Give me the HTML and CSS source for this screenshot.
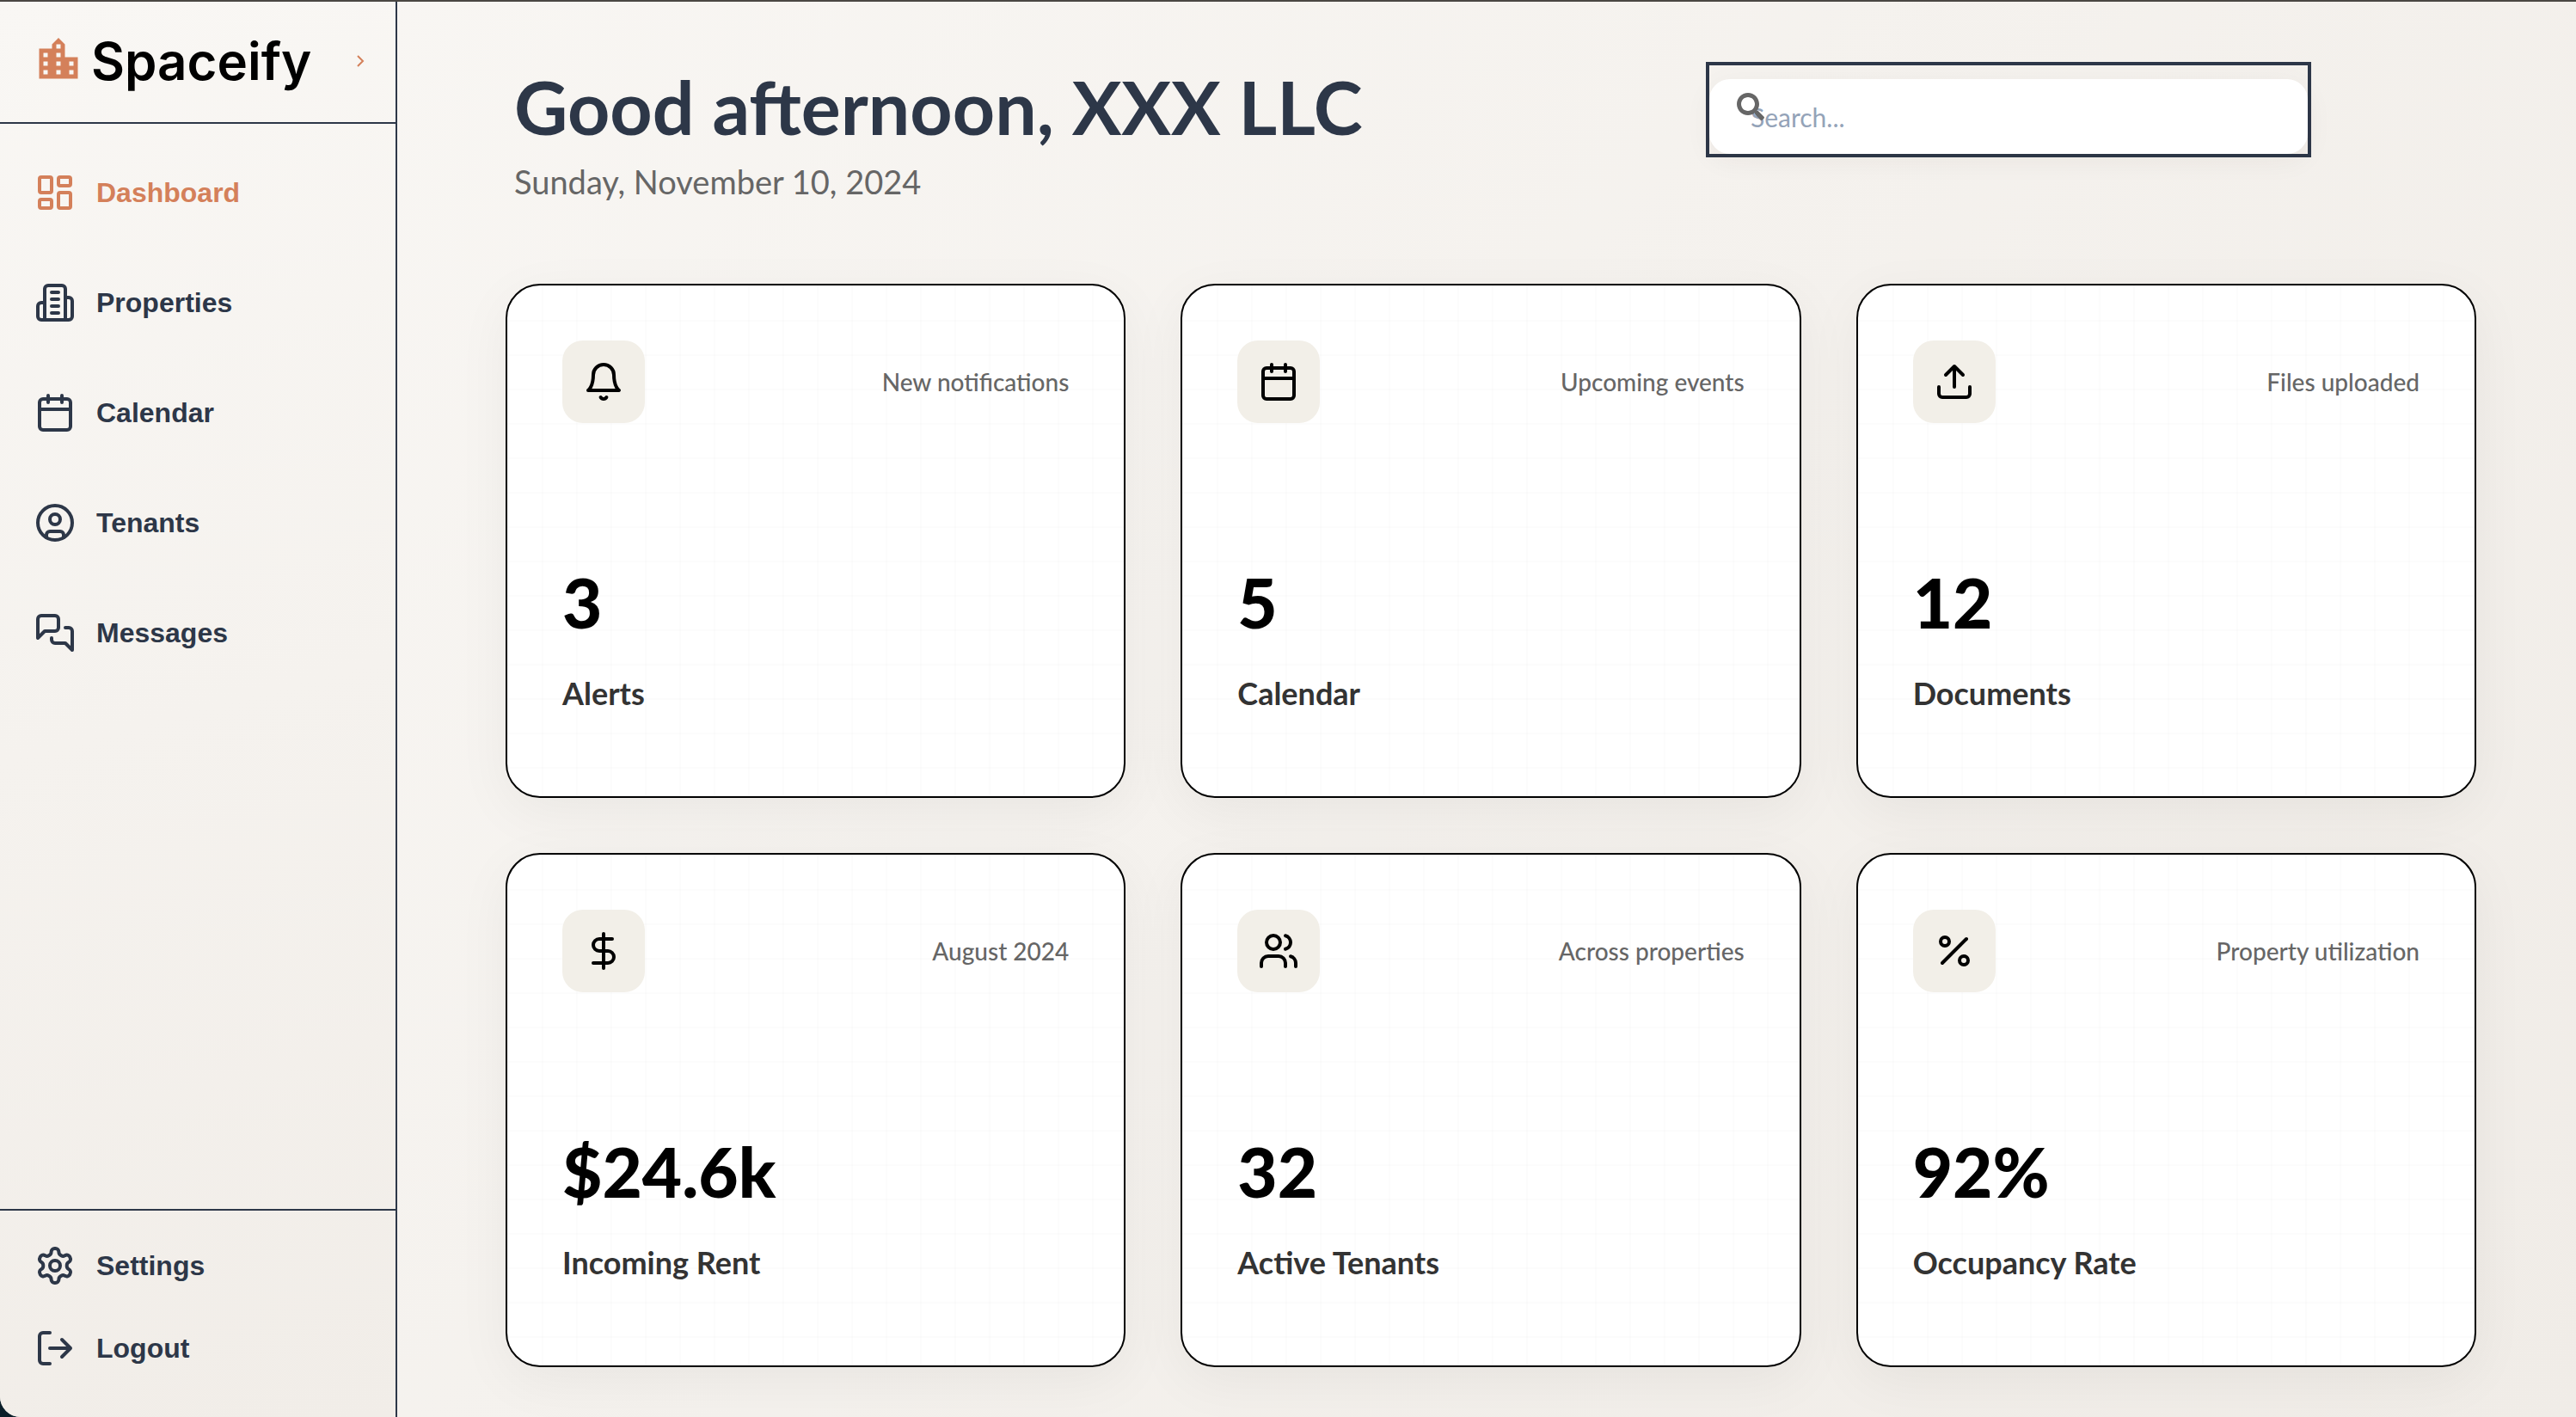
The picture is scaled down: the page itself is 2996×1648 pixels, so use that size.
FILE: index.html
```html
<!DOCTYPE html>
<html lang="en">
<head>
<meta charset="utf-8">
<meta name="viewport" content="width=device-width, initial-scale=1">
<title>Spaceify – Dashboard</title>
<link rel="stylesheet" href="styles.css">
</head>
<body>
<div class="app">
  <aside class="sidebar">
    <div class="brand">
      <svg class="brand-icon" viewBox="0 0 24 24" aria-hidden="true"><path d="M15 11V5l-3-3-3 3v2H3v14h18V11h-6zm-8 8H5v-2h2v2zm0-4H5v-2h2v2zm0-4H5V9h2v2zm6 8h-2v-2h2v2zm0-4h-2v-2h2v2zm0-4h-2V9h2v2zm0-4h-2V5h2v2zm6 12h-2v-2h2v2zm0-4h-2v-2h2v2z"/></svg>
      <span class="brand-name">Spaceify</span>
      <button class="collapse" type="button" aria-label="Toggle sidebar"><svg viewBox="0 0 10 16" aria-hidden="true"><path d="M2 2l6 6-6 6"/></svg></button>
    </div>
    <nav class="nav" aria-label="Main">
      <a class="nav-link active" href="#"><svg class="icon" viewBox="0 0 24 24" aria-hidden="true"><rect x="3" y="3" width="7" height="9" rx="1"/><rect x="14" y="3" width="7" height="5" rx="1"/><rect x="14" y="12" width="7" height="9" rx="1"/><rect x="3" y="16" width="7" height="5" rx="1"/></svg>Dashboard</a>
      <a class="nav-link" href="#"><svg class="icon" viewBox="0 0 24 24" aria-hidden="true"><path d="M6 22V4a2 2 0 0 1 2-2h8a2 2 0 0 1 2 2v18Z"/><path d="M6 12H4a2 2 0 0 0-2 2v6a2 2 0 0 0 2 2h2"/><path d="M18 9h2a2 2 0 0 1 2 2v9a2 2 0 0 1-2 2h-2"/><path d="M10 6h4M10 10h4M10 14h4M10 18h4"/></svg>Properties</a>
      <a class="nav-link" href="#"><svg class="icon" viewBox="0 0 24 24" aria-hidden="true"><path d="M8 2v4M16 2v4"/><rect x="3" y="4" width="18" height="18" rx="2"/><path d="M3 10h18"/></svg>Calendar</a>
      <a class="nav-link" href="#"><svg class="icon" viewBox="0 0 24 24" aria-hidden="true"><circle cx="12" cy="12" r="10"/><circle cx="12" cy="10" r="3"/><path d="M7 20.662V19a2 2 0 0 1 2-2h6a2 2 0 0 1 2 2v1.662"/></svg>Tenants</a>
      <a class="nav-link" href="#"><svg class="icon" viewBox="0 0 24 24" aria-hidden="true"><path d="M14 9a2 2 0 0 1-2 2H6l-4 4V4c0-1.1.9-2 2-2h8a2 2 0 0 1 2 2v5Z"/><path d="M18 9h2a2 2 0 0 1 2 2v11l-4-4h-6a2 2 0 0 1-2-2v-1"/></svg>Messages</a>
    </nav>
    <nav class="nav-footer" aria-label="Account">
      <a class="nav-link" href="#"><svg class="icon" viewBox="0 0 24 24" aria-hidden="true"><path d="M12.22 2h-.44a2 2 0 0 0-2 2v.18a2 2 0 0 1-1 1.73l-.43.25a2 2 0 0 1-2 0l-.15-.08a2 2 0 0 0-2.73.73l-.22.38a2 2 0 0 0 .73 2.73l.15.1a2 2 0 0 1 1 1.72v.51a2 2 0 0 1-1 1.74l-.15.09a2 2 0 0 0-.73 2.73l.22.38a2 2 0 0 0 2.73.73l.15-.08a2 2 0 0 1 2 0l.43.25a2 2 0 0 1 1 1.73V20a2 2 0 0 0 2 2h.44a2 2 0 0 0 2-2v-.18a2 2 0 0 1 1-1.73l.43-.25a2 2 0 0 1 2 0l.15.08a2 2 0 0 0 2.73-.73l.22-.39a2 2 0 0 0-.73-2.73l-.15-.08a2 2 0 0 1-1-1.74v-.5a2 2 0 0 1 1-1.74l.15-.09a2 2 0 0 0 .73-2.73l-.22-.38a2 2 0 0 0-2.73-.73l-.15.08a2 2 0 0 1-2 0l-.43-.25a2 2 0 0 1-1-1.73V4a2 2 0 0 0-2-2z"/><circle cx="12" cy="12" r="3"/></svg>Settings</a>
      <a class="nav-link" href="#"><svg class="icon" viewBox="0 0 24 24" aria-hidden="true"><path d="M9 21H5a2 2 0 0 1-2-2V5a2 2 0 0 1 2-2h4"/><path d="M16 17l5-5-5-5M21 12H9"/></svg>Logout</a>
    </nav>
  </aside>

  <main class="main">
    <header class="page-head">
      <div class="greeting">
        <h1 class="title">Good afternoon, XXX LLC</h1>
        <p class="date">Sunday, November 10, 2024</p>
      </div>
      <form class="search" role="search">
        <input class="search-input" type="search" placeholder="Search..." aria-label="Search">
        <svg class="search-icon" viewBox="0 0 512 512" aria-hidden="true"><path d="M505 442.7L405.3 343c-4.5-4.5-10.6-7-17-7H372c27.6-35.3 44-79.7 44-128C416 93.1 322.9 0 208 0S0 93.1 0 208s93.1 208 208 208c48.3 0 92.7-16.4 128-44v16.3c0 6.4 2.5 12.5 7 17l99.7 99.7c9.4 9.4 24.6 9.4 33.9 0l28.3-28.3c9.4-9.4 9.4-24.6.1-34zM208 336c-70.7 0-128-57.2-128-128 0-70.7 57.2-128 128-128 70.7 0 128 57.2 128 128 0 70.7-57.2 128-128 128z"/></svg>
      </form>
    </header>

    <section class="cards" aria-label="Overview">
      <article class="card">
        <div class="card-head"><span class="card-icon"><svg class="icon" viewBox="0 0 24 24" aria-hidden="true"><path d="M6 8a6 6 0 0 1 12 0c0 7 3 9 3 9H3s3-2 3-9"/><path d="M10.3 21a1.94 1.94 0 0 0 3.4 0"/></svg></span><span class="card-meta">New notifications</span></div>
        <div class="card-body"><p class="card-value">3</p><h2 class="card-label">Alerts</h2></div>
      </article>
      <article class="card">
        <div class="card-head"><span class="card-icon"><svg class="icon" viewBox="0 0 24 24" aria-hidden="true"><path d="M8 2v4M16 2v4"/><rect x="3" y="4" width="18" height="18" rx="2"/><path d="M3 10h18"/></svg></span><span class="card-meta">Upcoming events</span></div>
        <div class="card-body"><p class="card-value">5</p><h2 class="card-label">Calendar</h2></div>
      </article>
      <article class="card">
        <div class="card-head"><span class="card-icon"><svg class="icon" viewBox="0 0 24 24" aria-hidden="true"><path d="M21 15v4a2 2 0 0 1-2 2H5a2 2 0 0 1-2-2v-4"/><path d="M17 8l-5-5-5 5M12 3v12"/></svg></span><span class="card-meta">Files uploaded</span></div>
        <div class="card-body"><p class="card-value">12</p><h2 class="card-label">Documents</h2></div>
      </article>
      <article class="card">
        <div class="card-head"><span class="card-icon"><svg class="icon" viewBox="0 0 24 24" aria-hidden="true"><path d="M12 2v20"/><path d="M17 5H9.500a3.500 3.500 0 0 0 0 7h5a3.500 3.500 0 0 1 0 7H6"/></svg></span><span class="card-meta">August 2024</span></div>
        <div class="card-body"><p class="card-value">$24.6k</p><h2 class="card-label">Incoming Rent</h2></div>
      </article>
      <article class="card">
        <div class="card-head"><span class="card-icon"><svg class="icon" viewBox="0 0 24 24" aria-hidden="true"><path d="M16 21v-2a4 4 0 0 0-4-4H6a4 4 0 0 0-4 4v2"/><circle cx="9" cy="7" r="4"/><path d="M22 21v-2a4 4 0 0 0-3-3.870"/><path d="M16 3.130a4 4 0 0 1 0 7.750"/></svg></span><span class="card-meta">Across properties</span></div>
        <div class="card-body"><p class="card-value">32</p><h2 class="card-label">Active Tenants</h2></div>
      </article>
      <article class="card">
        <div class="card-head"><span class="card-icon"><svg class="icon" viewBox="0 0 24 24" aria-hidden="true"><path d="M19 5L5 19"/><circle cx="6.500" cy="6.500" r="2.500"/><circle cx="17.500" cy="17.500" r="2.500"/></svg></span><span class="card-meta">Property utilization</span></div>
        <div class="card-body"><p class="card-value">92%</p><h2 class="card-label">Occupancy Rate</h2></div>
      </article>
    </section>
  </main>
</div>
</body>
</html>
```
FILE: styles.css
```css
:root {
  --navy: #2d3748;
  --accent: #d4805a;
  --muted: #666;
  --display: Lato, "Open Sans", sans-serif;
}

* { box-sizing: border-box; }

body {
  margin: 0;
  background: #0b1f2a;
  font-family: var(--display);
}

h1, h2, p { margin: 0; }

.app {
  display: flex;
  min-height: 100vh;
  border-top: 2px solid #4a4743;
  border-bottom-left-radius: 24px;
  overflow: hidden;
  background: linear-gradient(135deg, #f9f7f4 0%, #f0ece7 100%);
}

.icon {
  width: 48px;
  height: 48px;
  flex: none;
  fill: none;
  stroke: currentColor;
  stroke-width: 2;
  stroke-linecap: round;
  stroke-linejoin: round;
}

/* Sidebar */
.sidebar {
  display: flex;
  flex-direction: column;
  flex: none;
  width: 462px;
  border-right: 2px solid var(--navy);
  background: linear-gradient(165deg, #f9f7f4 0%, #f1ede8 100%);
}

.brand {
  display: flex;
  align-items: center;
  gap: 8px;
  height: 142px;
  padding: 0 28px 2px 38px;
  border-bottom: 2px solid var(--navy);
}

.brand-icon {
  width: 60px;
  height: 60px;
  margin-bottom: 4px;
  fill: var(--accent);
}

.brand-name {
  flex: 1;
  font-family: Inter, sans-serif;
  font-size: 60px;
  font-weight: 600;
  line-height: 72px;
  color: #000;
}

.collapse {
  display: flex;
  padding: 8px;
  border: 0;
  background: none;
}

.collapse svg {
  width: 10px;
  height: 16px;
  fill: none;
  stroke: var(--accent);
  stroke-width: 2;
}

.nav {
  display: flex;
  flex-direction: column;
  flex: 1;
  gap: 32px;
  padding: 32px 0;
}

.nav-footer {
  padding: 16px 0 32px;
  border-top: 2px solid var(--navy);
}

.nav-link {
  display: flex;
  align-items: center;
  gap: 24px;
  height: 96px;
  padding: 0 40px;
  font-family: "Liberation Sans", Arial, sans-serif;
  font-size: 32px;
  font-weight: 700;
  color: var(--navy);
  text-decoration: none;
}

.nav-link.active { color: var(--accent); }

/* Main column */
.main {
  flex: 1;
  min-width: 0;
  padding: 70px 116px 56px 126px;
}

.page-head {
  display: flex;
  justify-content: space-between;
  align-items: flex-start;
  margin-bottom: 84px;
  padding: 0 192px 0 10px;
}

.title {
  font-size: 86px;
  font-weight: 700;
  line-height: 104px;
  color: var(--navy);
}

.date {
  font-size: 38px;
  line-height: 70px;
  color: var(--muted);
}

.search {
  position: relative;
  width: 704px;
  padding-top: 16px;
  border: 4px solid var(--navy);
}

.search-input {
  display: block;
  width: 100%;
  height: 87px;
  padding: 0 48px;
  border: 0;
  border-radius: 24px;
  outline: 0;
  appearance: none;
  background: #fff;
  box-shadow: 0 8px 32px rgba(60, 30, 20, .05);
  font-family: var(--display);
  font-size: 30px;
  color: var(--navy);
}

.search-input::placeholder {
  color: #94a3b8;
  opacity: 1;
}

.search-icon {
  position: absolute;
  top: 32px;
  left: 32px;
  width: 32px;
  height: 32px;
  fill: var(--muted);
}

/* Stat cards */
.cards {
  display: grid;
  grid-template-columns: repeat(3, minmax(0, 1fr));
  gap: 64px;
}

.card {
  display: flex;
  flex-direction: column;
  justify-content: space-between;
  min-height: 598px;
  padding: 64px 64px 98px;
  border: 2px solid #000;
  border-radius: 40px;
  background:
    linear-gradient(rgba(0, 0, 0, .012) 2px, transparent 2px) 0 0 / 40px 40px,
    linear-gradient(90deg, rgba(0, 0, 0, .012) 2px, transparent 2px) 0 0 / 40px 40px,
    #fff;
  box-shadow: 0 16px 64px rgba(0, 0, 0, .05);
}

.card-head {
  display: flex;
  justify-content: space-between;
  align-items: center;
}

.card-icon {
  display: flex;
  padding: 24px;
  border-radius: 24px;
  background: #f2efe8;
  color: #000;
}

.card-meta {
  font-size: 28px;
  font-weight: 500;
  line-height: 36px;
  color: var(--muted);
}

.card-value {
  margin-bottom: 44px;
  font-family: "Lato Black", Lato, sans-serif;
  font-size: 80px;
  font-weight: 900;
  line-height: 80px;
  color: #000;
}

.card-label {
  font-size: 36px;
  font-weight: 700;
  line-height: 44px;
  color: #333;
}
```
